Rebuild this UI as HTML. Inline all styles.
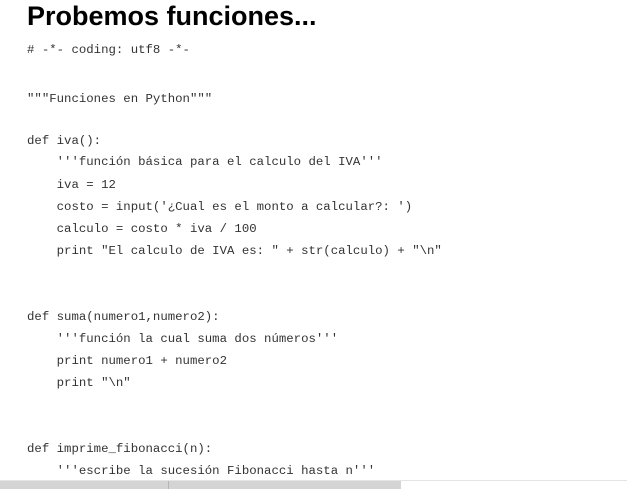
<!DOCTYPE html>
<html><head><meta charset="utf-8"><style>
body{margin:0;width:627px;height:489px;background:#fff;position:relative;overflow:hidden}
h1{position:absolute;left:27px;top:0;margin:0;font:bold 27px/32px "Liberation Sans",sans-serif;color:#000}
.l{position:absolute;left:27px;font:12.35px/16px "Liberation Mono",monospace;color:#333;white-space:pre}
.sb{position:absolute;left:0;top:481px;width:401px;height:8px;background:#d4d4d4}
.sbd{position:absolute;left:168px;top:481px;width:1px;height:8px;background:#b5b5b5}
.tl{position:absolute;left:0;top:480px;width:627px;height:1px;background:#e4e4e4}
</style></head><body>
<h1>Probemos funciones...</h1>
<div class="l" style="top:42px"># -*- coding: utf8 -*-</div>
<div class="l" style="top:91px">"""Funciones en Python"""</div>
<div class="l" style="top:133px">def iva():</div>
<div class="l" style="top:154px">    '''función básica para el calculo del IVA'''</div>
<div class="l" style="top:177px">    iva = 12</div>
<div class="l" style="top:199px">    costo = input('¿Cual es el monto a calcular?: ')</div>
<div class="l" style="top:221px">    calculo = costo * iva / 100</div>
<div class="l" style="top:243px">    print "El calculo de IVA es: " + str(calculo) + "\n"</div>
<div class="l" style="top:309px">def suma(numero1,numero2):</div>
<div class="l" style="top:331px">    '''función la cual suma dos números'''</div>
<div class="l" style="top:353px">    print numero1 + numero2</div>
<div class="l" style="top:375px">    print "\n"</div>
<div class="l" style="top:441px">def imprime_fibonacci(n):</div>
<div class="l" style="top:463px">    '''escribe la sucesión Fibonacci hasta n'''</div>
<div class="tl"></div><div class="sb"></div><div class="sbd"></div>
</body></html>
